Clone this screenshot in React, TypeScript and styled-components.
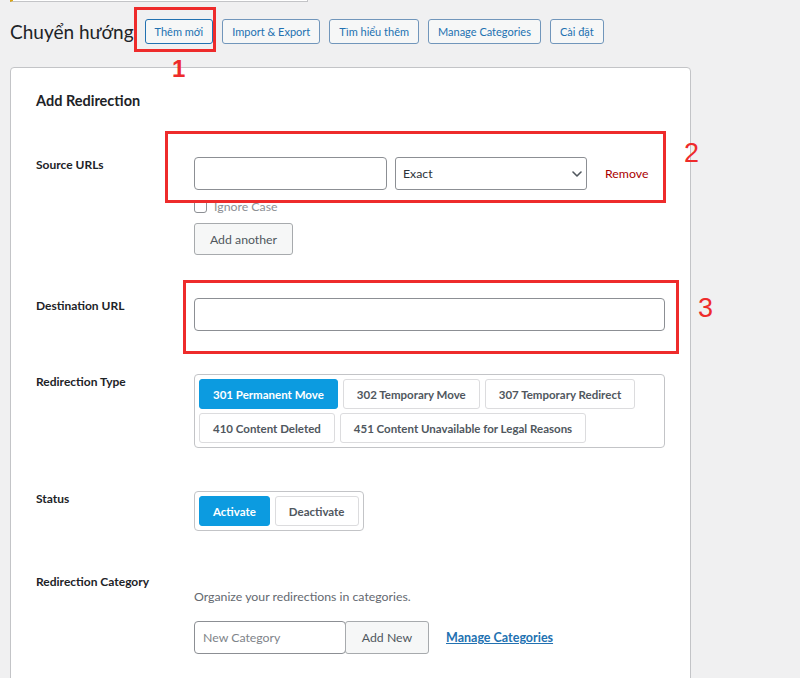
import styled, { createGlobalStyle } from 'styled-components';

const GlobalStyle = createGlobalStyle`
  body {
    margin: 0;
    background: #f0f0f1;
    font-family: Lato, "Noto Sans", sans-serif;
    color: #1d2327;
  }
`;

const headerActions = ['Thêm mới', 'Import & Export', 'Tìm hiểu thêm', 'Manage Categories', 'Cài đặt'];

const redirectTypes = [
  '301 Permanent Move',
  '302 Temporary Move',
  '307 Temporary Redirect',
  '410 Content Deleted',
  '451 Content Unavailable for Legal Reasons',
];

const ChevronDown = () => (
  <svg width="10" height="6" viewBox="0 0 10 6" fill="none">
    <path d="M1 1l4 4 4-4" stroke="#50575e" strokeWidth="1.6" strokeLinecap="round" strokeLinejoin="round" />
  </svg>
);

const App = () => {
  return (
    <>
      <GlobalStyle />
      <PageStyled>
        <NoticeStyled />
        <HeaderStyled>
          <TitleStyled>Chuyển hướng</TitleStyled>
          {headerActions.map((label, i) => (
            <ActionButtonStyled key={label} $active={i === 0}>
              {label}
            </ActionButtonStyled>
          ))}
        </HeaderStyled>

        <PanelStyled>
          <HeadingStyled>Add Redirection</HeadingStyled>
          <FormStyled>
            <RowStyled>
              <LabelStyled>Source URLs</LabelStyled>
              <FieldStyled>
                <UrlLineStyled>
                  <TextInputStyled $width={193} />
                  <SelectStyled>
                    <span>Exact</span>
                    <ChevronDown />
                  </SelectStyled>
                  <RemoveStyled>Remove</RemoveStyled>
                </UrlLineStyled>
                <CheckLineStyled>
                  <CheckboxStyled />
                  <span>Ignore Case</span>
                </CheckLineStyled>
                <SecondaryButtonStyled $width={99}>Add another</SecondaryButtonStyled>
              </FieldStyled>
            </RowStyled>

            <RowStyled>
              <LabelStyled>Destination URL</LabelStyled>
              <FieldStyled>
                <TextInputStyled $width={471} />
              </FieldStyled>
            </RowStyled>

            <RowStyled>
              <LabelStyled>Redirection Type</LabelStyled>
              <FieldStyled>
                <ToggleGroupStyled $fixed>
                  {redirectTypes.map((label, i) => (
                    <ToggleButtonStyled key={label} $active={i === 0}>
                      {label}
                    </ToggleButtonStyled>
                  ))}
                </ToggleGroupStyled>
              </FieldStyled>
            </RowStyled>

            <RowStyled>
              <LabelStyled>Status</LabelStyled>
              <FieldStyled>
                <ToggleGroupStyled>
                  <ToggleButtonStyled $active>Activate</ToggleButtonStyled>
                  <ToggleButtonStyled>Deactivate</ToggleButtonStyled>
                </ToggleGroupStyled>
              </FieldStyled>
            </RowStyled>

            <RowStyled>
              <LabelStyled>Redirection Category</LabelStyled>
              <FieldStyled>
                <DescriptionStyled>Organize your redirections in categories.</DescriptionStyled>
                <UrlLineStyled>
                  <TextInputStyled $width={152} placeholder="New Category" />
                  <SecondaryButtonStyled $width={84} $joined>
                    Add New
                  </SecondaryButtonStyled>
                  <LinkStyled>Manage Categories</LinkStyled>
                </UrlLineStyled>
              </FieldStyled>
            </RowStyled>
          </FormStyled>
        </PanelStyled>

        {/* red annotation marks drawn over the screenshot */}
        <MarkBoxStyled $x={134} $y={7} $w={82} $h={45} />
        <MarkNumberStyled $x={172} $y={57} $size={24} $bold>
          1
        </MarkNumberStyled>
        <MarkBoxStyled $x={165} $y={131} $w={501} $h={72} />
        <MarkNumberStyled $x={684} $y={140} $size={27}>
          2
        </MarkNumberStyled>
        <MarkBoxStyled $x={183} $y={280} $w={496} $h={74} />
        <MarkNumberStyled $x={698} $y={295} $size={27}>
          3
        </MarkNumberStyled>
      </PageStyled>
    </>
  );
};

const PageStyled = styled.div`
  position: relative;
  height: 678px;
  overflow: hidden;
  padding: 0 10px;
`;

const NoticeStyled = styled.div`
  width: 298px;
  height: 2px;
  box-sizing: border-box;
  background: #fff;
  border: 1px solid #c3c4c7;
  border-top: none;
  border-left: 3px solid #dba617;
`;

const HeaderStyled = styled.div`
  display: flex;
  align-items: center;
  margin-top: 17px;
  height: 25px;
`;

const TitleStyled = styled.h1`
  margin: 0 11px 0 0;
  font-size: 19px;
  font-weight: 400;
  line-height: 25px;
  color: #1d2327;
`;

const ActionButtonStyled = styled.button<{ $active?: boolean }>`
  height: 25px;
  margin-right: 9px;
  padding: 0 9px;
  font-family: inherit;
  font-size: 11px;
  color: #2271b1;
  background: #f6f7f7;
  border: 1px solid ${(p) => (p.$active ? '#2271b1' : '#7196bb')};
  border-radius: 3px;
`;

const PanelStyled = styled.div`
  margin-top: 23px;
  width: 681px;
  min-height: 700px;
  box-sizing: border-box;
  padding: 25px 25px 0;
  background: #fff;
  border: 1px solid #c3c4c7;
  border-radius: 4px;
`;

const HeadingStyled = styled.h2`
  margin: 0 0 48px;
  font-size: 14.5px;
  font-weight: 700;
  line-height: 16px;
`;

const FormStyled = styled.div`
  display: flex;
  flex-direction: column;
  gap: 43px;
`;

const RowStyled = styled.div`
  display: grid;
  grid-template-columns: 158px 1fr;
  align-items: start;
`;

const LabelStyled = styled.div`
  font-size: 12px;
  font-weight: 700;
  line-height: 16px;
  color: #1d2327;
`;

const FieldStyled = styled.div`
  display: flex;
  flex-direction: column;
  align-items: flex-start;
`;

const UrlLineStyled = styled.div`
  display: flex;
  align-items: center;
`;

const TextInputStyled = styled.input<{ $width: number }>`
  width: ${(p) => p.$width}px;
  height: 33px;
  box-sizing: border-box;
  padding: 0 8px;
  font-family: inherit;
  font-size: 12.3px;
  color: #2c3338;
  background: #fff;
  border: 1px solid #8c8f94;
  border-radius: 4px;

  &::placeholder {
    color: #7e8389;
  }
`;

const SelectStyled = styled.div`
  display: flex;
  align-items: center;
  justify-content: space-between;
  width: 192px;
  height: 33px;
  box-sizing: border-box;
  margin-left: 8px;
  padding: 0 4px 0 7px;
  font-size: 12.3px;
  color: #2c3338;
  border: 1px solid #8c8f94;
  border-radius: 3px;
`;

const RemoveStyled = styled.span`
  margin-left: 18px;
  font-size: 12.3px;
  color: #a00;
`;

const CheckLineStyled = styled.label`
  display: flex;
  align-items: center;
  gap: 7px;
  margin-top: 9px;
  height: 14px;
  font-size: 12.3px;
  color: #8c8f94;
`;

const CheckboxStyled = styled.span`
  width: 13px;
  height: 13px;
  box-sizing: border-box;
  border: 1px solid #8c8f94;
  border-radius: 3px;
`;

const SecondaryButtonStyled = styled.button<{ $width: number; $joined?: boolean }>`
  width: ${(p) => p.$width}px;
  height: ${(p) => (p.$joined ? 33 : 32)}px;
  margin-top: ${(p) => (p.$joined ? 0 : 10)}px;
  margin-left: ${(p) => (p.$joined ? -1 : 0)}px;
  font-family: inherit;
  font-size: 12.3px;
  color: #50575e;
  background: #f6f7f7;
  border: 1px solid #a7aaad;
  border-radius: 3px;
`;

const ToggleGroupStyled = styled.div<{ $fixed?: boolean }>`
  display: ${(p) => (p.$fixed ? 'flex' : 'inline-flex')};
  flex-wrap: wrap;
  gap: 4px 5px;
  width: ${(p) => (p.$fixed ? '471px' : 'auto')};
  box-sizing: border-box;
  padding: 4px;
  border: 1px solid #c3c4c7;
  border-radius: 4px;
`;

const ToggleButtonStyled = styled.button<{ $active?: boolean }>`
  height: 30px;
  padding: 0 13px;
  font-family: inherit;
  font-size: 11.5px;
  font-weight: 700;
  color: ${(p) => (p.$active ? '#fff' : '#50575e')};
  background: ${(p) => (p.$active ? '#0c9be0' : '#fff')};
  border: 1px solid ${(p) => (p.$active ? '#0c9be0' : '#dcdcde')};
  border-radius: 3px;
`;

const DescriptionStyled = styled.p`
  margin: 15px 0 16px;
  font-size: 12.3px;
  line-height: 16px;
  color: #646970;
`;

const LinkStyled = styled.a`
  margin-left: 17px;
  font-size: 12.5px;
  font-weight: 700;
  color: #2271b1;
  text-decoration: underline;
`;

const MarkBoxStyled = styled.div<{ $x: number; $y: number; $w: number; $h: number }>`
  position: absolute;
  left: ${(p) => p.$x}px;
  top: ${(p) => p.$y}px;
  width: ${(p) => p.$w}px;
  height: ${(p) => p.$h}px;
  box-sizing: border-box;
  border: 3px solid #ee2b2b;
  pointer-events: none;
`;

const MarkNumberStyled = styled.div<{ $x: number; $y: number; $size: number; $bold?: boolean }>`
  position: absolute;
  left: ${(p) => p.$x}px;
  top: ${(p) => p.$y}px;
  font-family: "Liberation Sans", Arial, sans-serif;
  font-size: ${(p) => p.$size}px;
  font-weight: ${(p) => (p.$bold ? 700 : 400)};
  line-height: 1;
  color: #ee2b2b;
`;

export default App;
